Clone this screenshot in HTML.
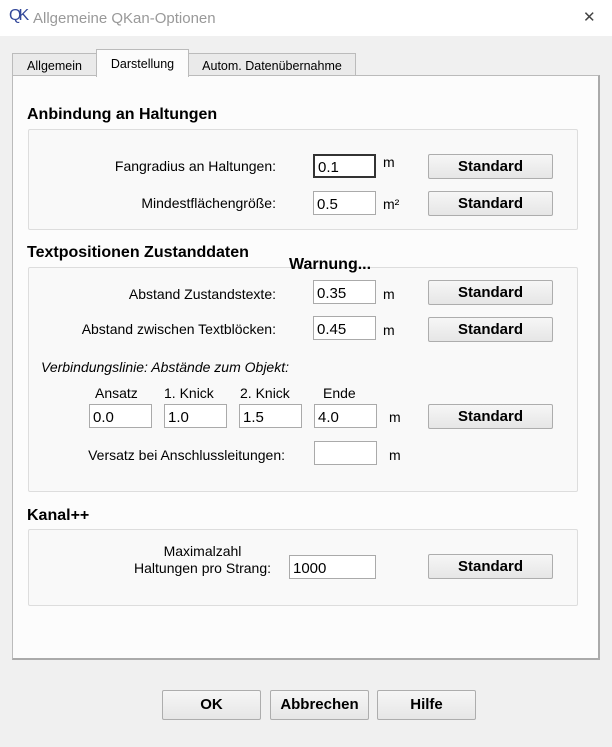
<!DOCTYPE html><html><head><style>
body{margin:0;width:612px;height:747px;background:#f0f0f0;font-family:"Liberation Sans",sans-serif;font-size:14px;position:relative;overflow:hidden}
.a{position:absolute}
.tb{left:0;top:0;width:612px;height:36px;background:#fff}
.tab{position:absolute;top:53px;height:22px;border:1px solid #bbb;border-bottom:none;background:#eaeaea;font-size:12.5px;text-align:center;line-height:24px;box-sizing:border-box}
.panel{left:12px;top:75px;width:588px;height:585px;background:#fcfcfc;border:1px solid #bbb;box-sizing:border-box;border-bottom:2px solid #aaa;border-right:2px solid #aaa}
.grp{position:absolute;left:28px;width:550px;border:1px solid #ddd;background:#f9f9f9;box-sizing:border-box;border-radius:2px}
.h{position:absolute;font-weight:bold;font-size:16px}
.inp{position:absolute;width:63px;height:24px;border:1px solid #aaa;background:#fff;box-sizing:border-box;font-size:15px;line-height:25px;padding-left:3px}
.btn{position:absolute;width:125px;height:25px;border:1px solid #adadad;border-radius:2px;background:linear-gradient(#f6f6f6,#e6e6e6);box-sizing:border-box;text-align:center;font-weight:bold;font-size:15px;line-height:23px}
.l{position:absolute;font-size:14px;text-align:right}
.u{position:absolute;font-size:14px}
</style></head><body>
<div class="a tb"></div>
<div class="a" style="left:9px;top:7px;font-size:16px;color:#33489a;letter-spacing:-3px">QK</div>
<div class="a" style="left:33px;top:10px;font-size:15px;color:#999">Allgemeine QKan-Optionen</div>
<div class="a" style="left:583px;top:8px;font-size:15px;color:#444">✕</div>
<div class="a panel"></div>
<div class="tab" style="left:12px;width:85px;">Allgemein</div>
<div class="tab" style="left:96px;top:49px;height:28px;width:93px;background:#fcfcfc;line-height:28px;">Darstellung</div>
<div class="tab" style="left:188px;width:168px;">Autom. Datenübernahme</div>

<div class="h" style="left:27px;top:106px">Anbindung an Haltungen</div>
<div class="grp" style="top:129px;height:101px"></div>
<div class="l" style="right:336px;top:158px">Fangradius an Haltungen:</div>
<div class="inp" style="left:313px;top:154px;border:2px solid #333;line-height:23px">0.1</div>
<div class="u" style="left:383px;top:154px">m</div>
<div class="btn" style="left:428px;top:154px">Standard</div>
<div class="l" style="right:336px;top:195px">Mindestflächengröße:</div>
<div class="inp" style="left:313px;top:191px">0.5</div>
<div class="u" style="left:383px;top:196px">m²</div>
<div class="btn" style="left:428px;top:191px">Standard</div>

<div class="h" style="left:27px;top:244px">Textpositionen Zustanddaten</div>
<div class="grp" style="top:267px;height:225px"></div>
<div class="h" style="left:289px;top:256px">Warnung...</div>
<div class="l" style="right:336px;top:286px">Abstand Zustandstexte:</div>
<div class="inp" style="left:313px;top:280px">0.35</div>
<div class="u" style="left:383px;top:286px">m</div>
<div class="btn" style="left:428px;top:280px">Standard</div>
<div class="l" style="right:336px;top:321px">Abstand zwischen Textblöcken:</div>
<div class="inp" style="left:313px;top:316px">0.45</div>
<div class="u" style="left:383px;top:322px">m</div>
<div class="btn" style="left:428px;top:317px">Standard</div>
<div class="u" style="left:41px;top:359px;font-style:italic">Verbindungslinie: Abstände zum Objekt:</div>
<div class="u" style="left:95px;top:385px">Ansatz</div>
<div class="u" style="left:164px;top:385px">1. Knick</div>
<div class="u" style="left:240px;top:385px">2. Knick</div>
<div class="u" style="left:323px;top:385px">Ende</div>
<div class="inp" style="left:89px;top:404px">0.0</div>
<div class="inp" style="left:164px;top:404px">1.0</div>
<div class="inp" style="left:239px;top:404px">1.5</div>
<div class="inp" style="left:314px;top:404px">4.0</div>
<div class="u" style="left:389px;top:409px">m</div>
<div class="btn" style="left:428px;top:404px">Standard</div>
<div class="l" style="right:327px;top:447px">Versatz bei Anschlussleitungen:</div>
<div class="inp" style="left:314px;top:441px"></div>
<div class="u" style="left:389px;top:447px">m</div>

<div class="h" style="left:27px;top:507px">Kanal++</div>
<div class="grp" style="top:529px;height:77px"></div>
<div class="l" style="right:341px;top:543px;line-height:17px;text-align:center">Maximalzahl<br>Haltungen pro Strang:</div>
<div class="inp" style="left:289px;top:555px;width:87px">1000</div>
<div class="btn" style="left:428px;top:554px">Standard</div>

<div class="btn" style="left:162px;top:690px;width:99px;height:30px;line-height:28px">OK</div>
<div class="btn" style="left:270px;top:690px;width:99px;height:30px;line-height:28px">Abbrechen</div>
<div class="btn" style="left:377px;top:690px;width:99px;height:30px;line-height:28px">Hilfe</div>
</body></html>
